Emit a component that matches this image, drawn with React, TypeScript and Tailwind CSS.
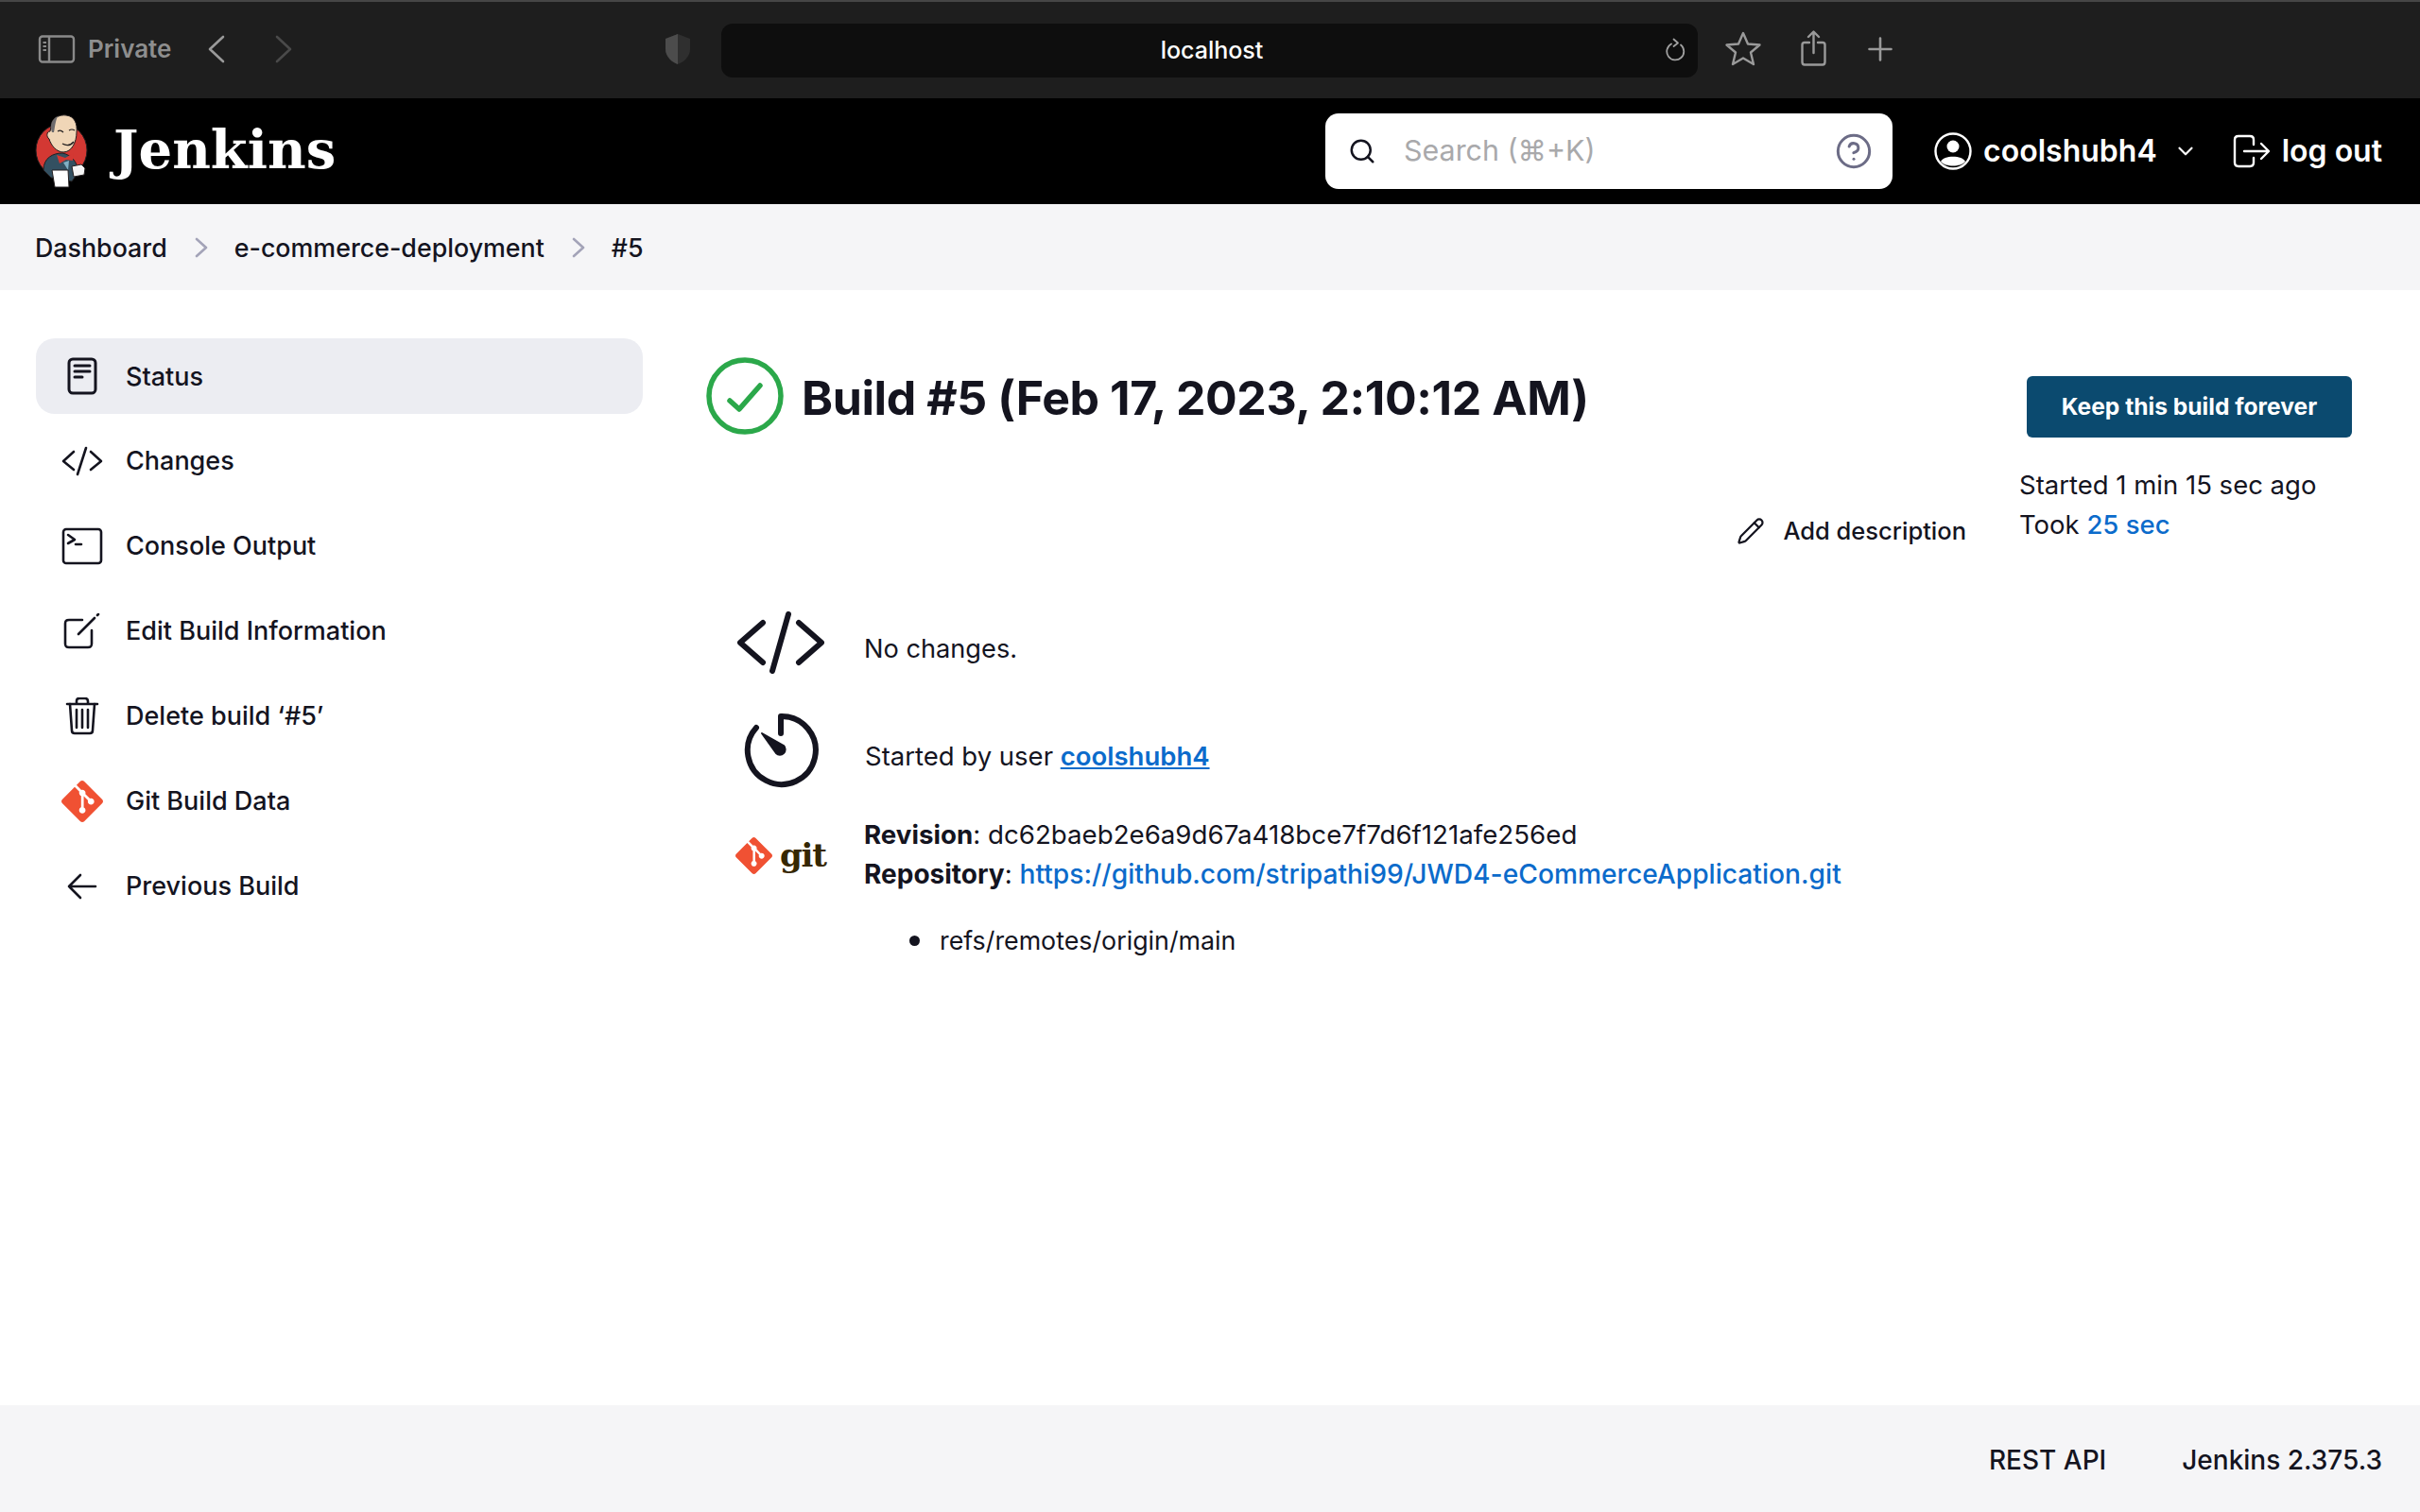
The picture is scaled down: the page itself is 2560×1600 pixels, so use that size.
import React from "react";
import { SiGit } from "react-icons/si";
import { ChevronDown, Search, CircleHelp, Pencil } from "lucide-react";

const C = "#14141f";

function Jenkins() {
  return (
    <svg width="60" height="80" viewBox="0 0 60 80" className="shrink-0">
      <ellipse cx="29" cy="39" rx="27" ry="28" fill="#d33833" stroke="#231f20" strokeWidth="1" />
      <path d="M10 60 C10 47 20 42 30 42 C40 44 46 52 47 62 L40 72 L18 68 Z" fill="#335061" stroke="#231f20" strokeWidth="1" />
      <path d="M18 14 C18 5 27 1 34 2 C43 3 46 11 45 20 C45 30 40 41 31 41 C24 41 18 34 16 27 C13 25 13 19 17 19 Z" fill="#f0d6b7" stroke="#231f20" strokeWidth="1" />
      <path d="M19 20 C16 12 20 5 25 3 C22 10 22 16 21 20 Z" fill="#6d6b6d" />
      <path d="M25 19 Q28 17 31 20 M37 18 Q40 16 43 18" stroke="#231f20" strokeWidth="1.2" fill="none" />
      <path d="M30 32 Q37 36 42 30" stroke="#231f20" strokeWidth="1.4" fill="none" />
      <path d="M24 44 L33 47 L42 42 L41 50 L34 49 L27 53 Z" fill="#d33833" />
      <path d="M31 52 L37 50 L36 60 Z" fill="#81b0c4" />
      <path d="M19 60 L36 60 L37 78 L22 78 Z" fill="#fff" stroke="#231f20" strokeWidth="1" />
      <path d="M40 56 L50 54 L54 58 L53 65 L42 67 Z" fill="#f4f4f4" stroke="#231f20" strokeWidth="1" />
    </svg>
  );
}

function Crumb() {
  return (
    <svg className="ml-[29px] mr-[28px]" width="14" height="22" viewBox="0 0 14 22" fill="none" stroke="#a3a3b8" strokeWidth="2.6" strokeLinecap="round" strokeLinejoin="round">
      <path d="M2 2 L12 11 L2 20" />
    </svg>
  );
}

function Side({ active, icon, children }: { active?: boolean; icon: React.ReactNode; children: React.ReactNode }) {
  return (
    <div className={`flex h-[80px] items-center rounded-[20px] pl-[27px] ${active ? "bg-[#ecedf2]" : ""}`}>
      <span className="flex w-[44px] h-[44px] items-center justify-center">{icon}</span>
      <span className={`ml-[24px] text-[27px] font-medium text-[#14141f] ${active ? "pt-[2px]" : ""}`}>{children}</span>
    </div>
  );
}

export default function App() {
  return (
    <div className="flex h-[1600px] flex-col bg-white font-['Inter',sans-serif] text-[#14141f]">
      {/* browser chrome */}
      <div className="flex h-[104px] shrink-0 items-center border-t-2 border-[#464646] bg-[#1e1e1e] pl-[40px]">
        <svg className="mb-[2px]" width="40" height="30" viewBox="0 0 40 30" fill="none" stroke="#8a8a8a" strokeWidth="2.4">
          <rect x="2" y="1.5" width="36" height="27" rx="3" />
          <path d="M12 2 V28" />
          <path d="M5.5 8 H9 M5.5 12 H9 M5.5 16 H9" strokeWidth="2" />
        </svg>
        <span className="mb-[3px] ml-[13px] w-[90px] text-[26px] font-semibold text-[#8e8e8e]">Private</span>
        <svg className="mb-[3px] ml-[36px]" width="20" height="30" viewBox="0 0 20 30" fill="none" stroke="#9a9a9a" strokeWidth="2.6" strokeLinecap="round" strokeLinejoin="round">
          <path d="M17 2 L3 15 L17 28" />
        </svg>
        <svg className="mb-[3px] ml-[51px]" width="20" height="30" viewBox="0 0 20 30" fill="none" stroke="#4a4a4a" strokeWidth="2.6" strokeLinecap="round" strokeLinejoin="round">
          <path d="M3 2 L17 15 L3 28" />
        </svg>
        <svg className="mb-[2px] ml-[393px]" width="28" height="34" viewBox="0 0 28 34">
          <path d="M14 1 L27 6 V17 C27 25 20 31 14 33 C8 31 1 25 1 17 V6 Z" fill="#2f2f2f" />
          <path d="M14 1 L1 6 V17 C1 25 8 31 14 33 Z" fill="#4c4c4c" />
        </svg>
        <div className="relative ml-[32px] flex h-[57px] w-[1033px] items-center justify-center rounded-[12px] bg-[#0e0e0e] pl-[5px] pt-[2px] text-[25px] font-medium text-white">
          localhost
          <svg className="absolute right-[13px] top-[15px]" width="22" height="25" viewBox="0 0 22 25" fill="none" stroke="#a0a0a0" strokeWidth="1.8" strokeLinecap="round" strokeLinejoin="round">
            <path d="M7 6.5 A9 9 0 1 0 17 7.5" />
            <path d="M9.5 1.5 L14 5.5 L9.5 9" />
          </svg>
        </div>
        <svg className="mb-[4px] ml-[28px]" width="40" height="38" viewBox="0 0 40 38" fill="none" stroke="#9a9a9a" strokeWidth="2.4" strokeLinejoin="round">
          <path d="M20 3 L25 14.5 L37.5 15.5 L28 23.5 L31 36 L20 29.5 L9 36 L12 23.5 L2.5 15.5 L15 14.5 Z" />
        </svg>
        <svg className="mb-[4px] ml-[41px]" width="27" height="38" viewBox="0 0 27 38" fill="none" stroke="#9a9a9a" strokeWidth="2.4" strokeLinecap="round" strokeLinejoin="round">
          <path d="M9 13 H4 C2.5 13 1.5 14 1.5 15.5 V33.5 C1.5 35.5 2.5 36.5 4 36.5 H23 C24.5 36.5 25.5 35.5 25.5 33.5 V15.5 C25.5 14 24.5 13 23 13 H18" />
          <path d="M13.5 24 V2 M8 7 L13.5 1.5 L19 7" />
        </svg>
        <svg className="mb-[3px] ml-[44px]" width="26" height="26" viewBox="0 0 26 26" fill="none" stroke="#9a9a9a" strokeWidth="2.6" strokeLinecap="round">
          <path d="M13 1.5 V24.5 M1.5 13 H24.5" />
        </svg>
      </div>

      {/* header */}
      <div className="flex h-[112px] shrink-0 items-center bg-black pl-[36px] pr-[40px] text-white">
        <Jenkins />
        <span className="ml-[24px] pb-[5px] font-['DejaVu_Serif',serif] text-[56px] font-bold">Jenkins</span>
        <div className="ml-auto flex h-[80px] w-[600px] items-center rounded-[14px] bg-white pl-[24px] pr-[21px]">
          <Search className="text-[#14141f]" size={30} strokeWidth={2} />
          <span className="ml-[29px] text-[30.4px] text-[#a9a9ab]">Search (⌘+K)</span>
          <CircleHelp className="ml-auto text-[#6c6c86]" size={40} strokeWidth={1.8} />
        </div>
        <svg className="ml-[44px]" width="40" height="40" viewBox="0 0 40 40">
          <circle cx="20" cy="20" r="18.5" fill="none" stroke="white" strokeWidth="2.4" />
          <circle cx="20" cy="15" r="6.5" fill="white" />
          <path d="M7 31 C10 24 30 24 33 31 C28 37 12 37 7 31 Z" fill="white" />
        </svg>
        <span className="ml-[12px] text-[32px] font-semibold">coolshubh4</span>
        <ChevronDown className="ml-[17px]" size={26} strokeWidth={2} />
        <svg className="ml-[37px]" width="40" height="36" viewBox="0 0 40 36" fill="none" stroke="white" strokeWidth="2.4" strokeLinecap="round" strokeLinejoin="round">
          <path d="M22 11 V6 C22 3 21 2 18 2 H6 C3 2 2 3 2 6 V30 C2 33 3 34 6 34 H18 C21 34 22 33 22 30 V25" />
          <path d="M12 18 H37 M30 10 L38 18 L30 26" />
        </svg>
        <span className="ml-[12px] text-[32px] font-semibold">log out</span>
      </div>

      {/* breadcrumb */}
      <div className="flex h-[91px] shrink-0 items-center bg-[#f5f5f7] pl-[37px] pt-[1px] text-[26.8px] font-medium">
        <span>Dashboard</span>
        <Crumb />
        <span>e-commerce-deployment</span>
        <Crumb />
        <span>#5</span>
      </div>

      {/* main */}
      <div className="flex flex-1">
        <div className="ml-[38px] mt-[51px] flex w-[642px] shrink-0 flex-col gap-[10px]">
          <Side active icon={
            <svg width="32" height="40" viewBox="0 0 32 40" fill="none" stroke={C} strokeWidth="3" strokeLinecap="round">
              <rect x="2" y="2" width="28" height="36" rx="4" />
              <path d="M8 9 H24 M8 15 H24 M8 21 H16" />
            </svg>
          }>Status</Side>
          <Side icon={
            <svg width="44" height="32" viewBox="0 0 44 32" fill="none" stroke={C} strokeWidth="2.6" strokeLinecap="round" strokeLinejoin="round">
              <path d="M13 6 L2 16 L13 25 M31 6 L42 16 L31 25 M26 2 L17 30" />
            </svg>
          }>Changes</Side>
          <Side icon={
            <svg width="44" height="40" viewBox="0 0 44 40" fill="none" stroke={C} strokeWidth="2.6" strokeLinecap="round" strokeLinejoin="round">
              <rect x="2" y="2" width="40" height="36" rx="3" />
              <path d="M7 8 L14 13 L7 17 M15 18 H21" />
            </svg>
          }>Console Output</Side>
          <Side icon={
            <svg width="40" height="38" viewBox="0 0 40 38" fill="none" stroke={C} strokeWidth="2.6" strokeLinecap="round" strokeLinejoin="round">
              <path d="M20 7 H6 C3 7 2 8 2 11 V32 C2 35 3 36 6 36 H26 C29 36 30 35 30 32 V18" />
              <path d="M16 22 L33 5 M36 2 L37 1" />
            </svg>
          }>Edit Build Information</Side>
          <Side icon={
            <svg width="36" height="40" viewBox="0 0 36 40" fill="none" stroke={C} strokeWidth="2.6" strokeLinecap="round" strokeLinejoin="round">
              <path d="M2 7 H34 M12 7 V4 C12 2 13 1 15 1 H21 C23 1 24 2 24 4 V7" />
              <path d="M5 7 L7 35 C7 37 8 38 10 38 H26 C28 38 29 37 29 35 L31 7" />
              <path d="M12 13 V32 M18 13 V32 M24 13 V32" />
            </svg>
          }>Delete build ‘#5’</Side>
          <Side icon={<SiGit size={46} color="#f05133" />}>Git Build Data</Side>
          <Side icon={
            <svg width="32" height="28" viewBox="0 0 32 28" fill="none" stroke={C} strokeWidth="2.6" strokeLinecap="round" strokeLinejoin="round">
              <path d="M30 14 H2 M14 2 L2 14 L14 26" />
            </svg>
          }>Previous Build</Side>
        </div>

        <div className="ml-[67px] flex-1 pt-[71px]">
          <div className="flex">
            <div className="w-[1389px] shrink-0">
              <div className="flex items-center">
                <svg width="82" height="82" viewBox="0 0 82 82" fill="none" stroke="#2ba84a" strokeLinecap="round" strokeLinejoin="round">
                  <circle cx="41" cy="41" r="38" strokeWidth="5.5" />
                  <path d="M25 46 L35 55 L57 30" strokeWidth="5.5" />
                </svg>
                <h1 className="ml-[19px] mt-[5px] text-[50px] font-bold tracking-[-0.4px]">Build #5 (Feb 17, 2023, 2:10:12 AM)</h1>
              </div>
              <div className="mr-[56px] mt-[83px] flex items-center justify-end text-[25.5px] font-medium">
                <Pencil size={30} strokeWidth={1.8} />
                <span className="ml-[19px]">Add description</span>
              </div>

              <div className="mt-[54px] flex h-[90px] items-center">
                <svg className="ml-[33px]" width="92" height="66" viewBox="0 0 92 66" fill="none" stroke={C} strokeWidth="6" strokeLinecap="round" strokeLinejoin="round">
                  <path d="M27 12 L3 33 L27 54 M65 12 L89 33 L65 54 M54 3 L37 63" />
                </svg>
                <span className="ml-[42px] mt-[15px] text-[27.2px]">No changes.</span>
              </div>
              <div className="mt-[24px] flex h-[90px] items-center">
                <svg className="ml-[38px]" width="82" height="82" viewBox="0 0 82 82" fill="none" stroke={C} strokeWidth="6" strokeLinecap="round" strokeLinejoin="round">
                  <path d="M15 17 A36 36 0 1 0 41 5 L41 23" />
                  <path d="M21 23 L36 44 A5.5 5.5 0 0 0 44 36 Z" fill={C} strokeWidth="2" />
                </svg>
                <span className="ml-[48px] mt-[12px] text-[27.5px]">Started by user <a className="font-semibold text-[#0b6bcb] underline">coolshubh4</a></span>
              </div>
              <div className="mt-[23px] flex">
                <div className="ml-[31px] mt-[18px] flex h-[50px] w-[100px] shrink-0 items-center">
                  <SiGit size={39} color="#f05133" />
                  <span className="ml-[8px] font-['DejaVu_Serif',serif] text-[34px] font-bold leading-none tracking-[-1.2px] text-[#362701]">git</span>
                </div>
                <div className="ml-[36px] text-[27.7px] leading-[42px]">
                  <div><b className="font-bold">Revision</b>: dc62baeb2e6a9d67a418bce7f7d6f121afe256ed</div>
                  <div><b className="text-[28px] font-bold">Repository</b>: <a className="text-[28.2px] font-medium text-[#0b6bcb]">https://github.com/stripathi99/JWD4-eCommerceApplication.git</a></div>
                  <ul className="ml-[48px] mt-[28px] list-none text-[26.8px]">
                    <li className="flex items-center"><span className="mr-[21px] h-[11px] w-[11px] rounded-full bg-[#14141f]" />refs/remotes/origin/main</li>
                  </ul>
                </div>
              </div>
            </div>
            <div className="min-w-0">
              <div className="ml-[8px] mt-[20px] flex h-[65px] w-[344px] items-center justify-center rounded-[6px] bg-[#0b4a6f] text-[24.6px] font-bold text-white">Keep this build forever</div>
              <div className="mt-[29px] text-[27.5px] leading-[42px]">
                <div>Started 1 min 15 sec ago</div>
                <div>Took <a className="font-medium text-[#0b6bcb]">25 sec</a></div>
              </div>
            </div>
          </div>
        </div>
      </div>

      {/* footer */}
      <div className="flex h-[113px] shrink-0 items-center justify-end bg-[#f5f5f7] pr-[40px] pt-[2px] text-[28px] font-medium">
        <span>REST API</span>
        <span className="ml-[80px]">Jenkins 2.375.3</span>
      </div>
    </div>
  );
}
